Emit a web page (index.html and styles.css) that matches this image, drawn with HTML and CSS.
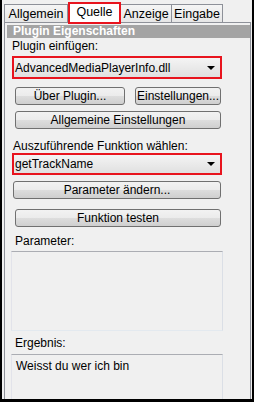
FILE: index.html
```html
<!DOCTYPE html>
<html>
<head>
<meta charset="utf-8">
<link rel="stylesheet" href="styles.css">
</head>
<body>
<div class="frame">
  <div class="tabs">
    <div class="tab tab-general">Allgemein</div>
    <div class="tab tab-active">Quelle</div>
    <div class="tab tab-display">Anzeige</div>
    <div class="tab tab-input">Eingabe</div>
  </div>
  <div class="panel">
    <div class="header">Plugin Eigenschaften</div>
    <div class="label label-first">Plugin einfügen:</div>
    <div class="combo combo-first"><span>AdvancedMediaPlayerInfo.dll</span><span class="arrow"></span></div>
    <div class="btnrow">
      <div class="btn btn-about">Über Plugin...</div>
      <div class="btn btn-settings">Einstellungen...</div>
    </div>
    <div class="btn btn-general">Allgemeine Einstellungen</div>
    <div class="label label-func">Auszuführende Funktion wählen:</div>
    <div class="combo combo-func"><span>getTrackName</span><span class="arrow"></span></div>
    <div class="btn btn-param">Parameter ändern...</div>
    <div class="btn btn-test">Funktion testen</div>
    <div class="label label-param">Parameter:</div>
    <div class="box box-param"></div>
    <div class="label label-result">Ergebnis:</div>
    <div class="box box-result">Weisst du wer ich bin</div>
  </div>
</div>
</body>
</html>
```
FILE: styles.css
```css
html, body {
  margin: 0;
  padding: 0;
}
*, *::before, *::after {
  box-sizing: border-box;
}
body {
  width: 254px;
  height: 402px;
  background: #000;
  overflow: hidden;
  font-family: "Liberation Sans", Arial, sans-serif;
  font-size: 12px;
  color: #000;
}
.frame {
  margin: 0 2px;
  height: 399px;
  background: #f0f0f0;
  display: flex;
  flex-direction: column;
  overflow: hidden;
}
.tabs {
  display: flex;
  align-items: flex-end;
  height: 22px;
  flex: none;
  padding-left: 2px;
  position: relative;
  z-index: 1;
}
.tab {
  height: 18px;
  line-height: 17px;
  padding-top: 1px;
  border: 1px solid #8e9199;
  border-bottom: none;
  background: linear-gradient(#f5f5f5, #e6e6e6);
  font-size: 12.5px;
  text-align: center;
}
.tab-general { width: 64px; }
.tab-display { width: 51px; border-left: none; }
.tab-input { width: 51px; border-left: none; }
.tab-active {
  width: 53px;
  height: 22px;
  line-height: 17px;
  padding-top: 0;
  background: #fff;
  border: 2px solid #e8141e;
  margin: 0 0 -2px 0;
}
.panel {
  flex: 1;
  margin: 0 1px 0 2px;
  border: 1px solid #8e9199;
  border-bottom: none;
  display: flex;
  flex-direction: column;
  align-items: flex-start;
}
.header {
  align-self: stretch;
  flex: none;
  margin: 2px 0 0 2px;
  height: 13px;
  line-height: 13px;
  background: #a4a4a4;
  color: #fff;
  font-weight: bold;
  font-size: 12px;
  padding-left: 6px;
}
.label {
  flex: none;
  margin-left: 7px;
  height: 14px;
  line-height: 14px;
  font-size: 12px;
}
.label-first { margin-top: 1px; }
.combo {
  flex: none;
  margin-left: 7px;
  width: 210px;
  height: 23px;
  border: 2px solid #e8141e;
  background: linear-gradient(#f4f4f4, #e0e0e0);
  display: flex;
  align-items: center;
  justify-content: space-between;
  padding: 0 5px 0 1px;
  font-size: 12px;
}
.combo-first { margin-top: 3px; }
.combo-func { margin-top: 0; height: 22px; }
.arrow {
  width: 0;
  height: 0;
  border-left: 4px solid transparent;
  border-right: 4px solid transparent;
  border-top: 4px solid #000;
}
.btn {
  flex: none;
  height: 18px;
  line-height: 16px;
  border: 1px solid #707070;
  border-radius: 3px;
  background: linear-gradient(#f2f2f2 0%, #ebebeb 50%, #dddddd 51%, #cfcfcf 100%);
  text-align: center;
  font-size: 12px;
}
.btnrow {
  flex: none;
  display: flex;
  margin-top: 8px;
  margin-left: 10px;
  gap: 10px;
}
.btn-about { width: 110px; }
.btn-settings { width: 86px; }
.btn-general {
  margin-left: 10px;
  margin-top: 6px;
  width: 206px;
}
.label-func { margin-top: 10px; margin-left: 8px; }
.btn-param {
  margin-left: 8px;
  margin-top: 6px;
  width: 208px;
}
.btn-test {
  margin-left: 10px;
  margin-top: 10px;
  width: 206px;
}
.label-param { margin-top: 7px; margin-left: 10px; }
.box {
  flex: none;
  margin-left: 6px;
  width: 212px;
  border-top: 1px solid #abadb3;
  border-left: 1px solid #e2e3ea;
  border-right: 1px solid #dbdfe6;
  border-bottom: 1px solid #e3e9ef;
  background: #f0f0f0;
}
.box-param {
  margin-top: 3px;
  height: 80px;
}
.label-result { margin-top: 5px; margin-left: 10px; }
.box-result {
  margin-top: 4px;
  flex: 1;
  border-bottom: none;
  padding: 4px 0 0 4px;
  line-height: 14px;
  font-size: 12px;
}
```
